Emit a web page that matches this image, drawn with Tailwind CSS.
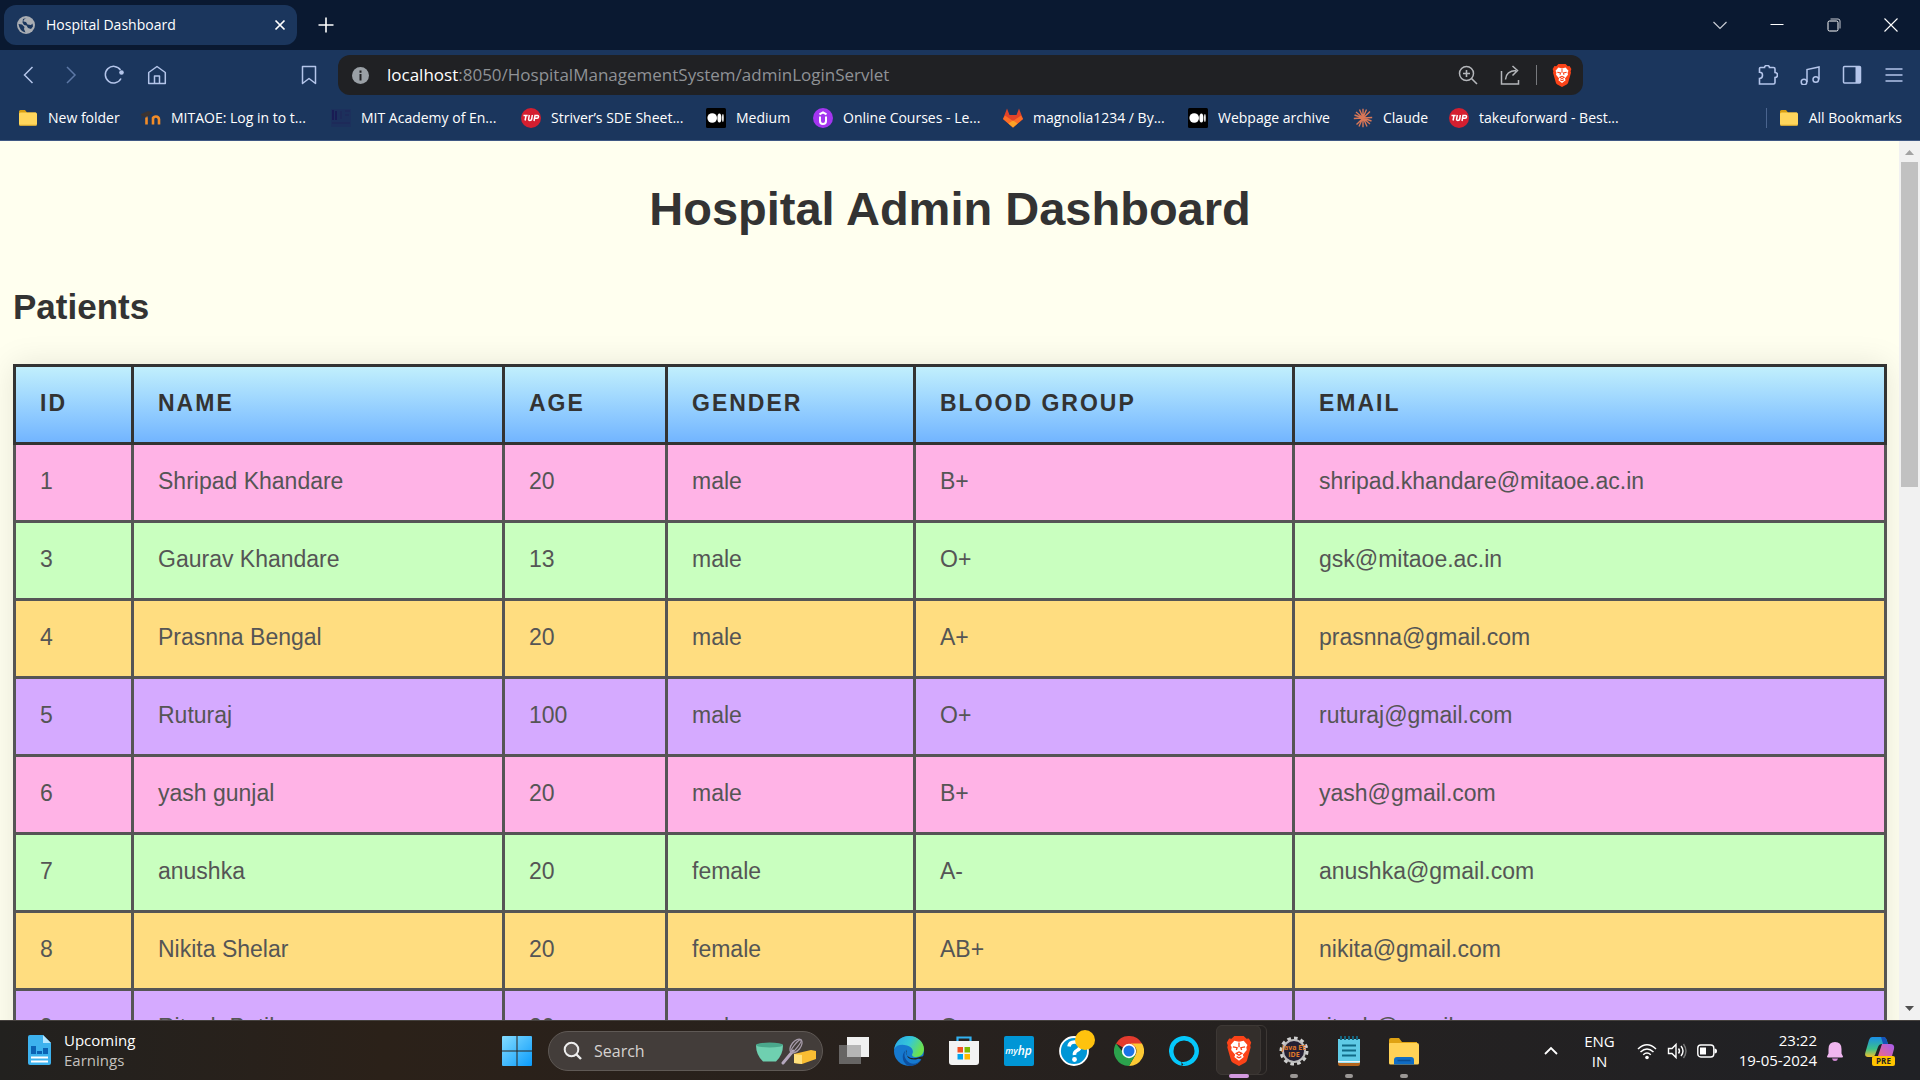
<!DOCTYPE html>
<html lang="en">
<head>
<meta charset="utf-8">
<title>Hospital Dashboard</title>
<script src="https://cdn.jsdelivr.net/npm/@tailwindcss/browser@4"></script>
</head>
<body class="flex h-screen flex-col overflow-hidden bg-[#ffffef] font-['Open_Sans',sans-serif]">
<svg class="hidden" aria-hidden="true">
  <symbol id="folder" viewBox="0 0 20 20"><path d="M1 3.500q0-1.500 1.500-1.500H7l2 2.500h9v11H1z" fill="#d9a012"/><rect x="1" y="4.500" width="18" height="13" rx="1.500" fill="#ffd65c"/><path d="M1.500 17.200h17" stroke="#e6b22e"/></symbol>
  <symbol id="tuf" viewBox="0 0 20 20"><circle cx="10" cy="10" r="10" fill="#d41f30"/><path d="M2.500 7.500h4.200M5 7.500l-.9 5M8.300 7l-.7 4q-.2 1.500 1.300 1.500t1.800-1.500l.6-4M13 13l1-5.500h2.500q1.200 0 1 1.400t-1.500 1.300h-2" fill="none" stroke="#fff" stroke-width="1.500"/></symbol>
  <symbol id="medium" viewBox="0 0 20 20"><rect width="20" height="20" rx="1.500" fill="#000"/><circle cx="6.200" cy="10" r="4.800" fill="#fff"/><ellipse cx="13.400" cy="10" rx="2" ry="4.500" fill="#fff"/><ellipse cx="16.900" cy="10" rx=".8" ry="4" fill="#fff"/></symbol>
  <symbol id="lion" viewBox="0 0 26 32"><path d="M5 3l3-3h10l3 3 2.500-.3L26 7l-1 3 .5 2-4 14q-.5 1.500-2 2.500L13 32l-6.500-3.500Q5 27.500 4.500 26L.5 12 1 10 0 7l2.500-4.300z" fill="#fb4318"/><path d="M8 5l5 1.200L18 5l4 4.500-1.200 2.500.5 3-4.300 5 1 2.500-5 4-5-4L9 20l-4.300-5 .5-3L4 9.500z" fill="#fff"/><path d="M6.500 11.500l4.500 1-.8 2.500M19.500 11.500l-4.500 1 .8 2.500M10 18.500l3-1.500 3 1.500-3 2zM10.500 22l2.500 1.300 2.500-1.300M13 7v5" fill="none" stroke="#fb4318" stroke-width="1.400"/></symbol>
</svg>

<header class="shrink-0 text-white">
  <div class="flex h-[50px] items-center bg-[#0a1931] pl-1">
    <div class="flex h-10 w-[293px] items-center rounded-xl bg-[#1b365d] pr-[7px] pl-[13px]">
      <svg class="h-[18px] w-[18px]" viewBox="0 0 18 18"><circle cx="9" cy="9" r="9" fill="#a9adb3"/><path d="M1.500 8l3.500.5 2.500 2.500-.5 2 1.500 3.500Q2.500 15 1.500 8zM9.500 2Q6 3.500 6.500 5.500L9 6l1.500 2.500 3.500.5 1.500-1.500.5 3-2 2.500-3-1-1.500-2.500L7 9 5.500 6.500 6 3z" fill="#1b365d"/></svg>
      <span class="ml-[11px] flex-1 text-sm">Hospital Dashboard</span>
      <button aria-label="Close tab" class="p-1"><svg class="h-3 w-3" viewBox="0 0 12 12"><path d="M1.500 1.500l9 9M10.500 1.500l-9 9" stroke="#fff" stroke-width="1.700"/></svg></button>
    </div>
    <button aria-label="New tab" class="ml-[19px] p-0.5"><svg class="h-4 w-4" viewBox="0 0 16 16"><path d="M8 .5v15M.5 8h15" stroke="#fff" stroke-width="1.600"/></svg></button>
    <div class="ml-auto flex items-center">
      <button aria-label="Search tabs" class="flex w-[57px] justify-center"><svg class="h-[14px] w-[14px]" viewBox="0 0 14 14"><path d="M.5 4L7 10.500 13.500 4" fill="none" stroke="#c8ccd4" stroke-width="1.200"/></svg></button>
      <button aria-label="Minimize" class="flex w-[57px] justify-center"><svg class="h-[14px] w-[14px]" viewBox="0 0 14 14"><path d="M.5 6.500h13" stroke="#fff"/></svg></button>
      <button aria-label="Restore" class="flex w-[57px] justify-center"><svg class="h-[14px] w-[14px]" viewBox="0 0 14 14"><rect x="1" y="3" width="10" height="10" rx="1.500" fill="none" stroke="#fff"/><path d="M3.500 1h7.500q2 0 2 2v7.500" fill="none" stroke="#c8ccd4"/></svg></button>
      <button aria-label="Close" class="flex w-[58px] justify-center"><svg class="h-[14px] w-[14px]" viewBox="0 0 14 14"><path d="M.5.5l13 13M13.500.5l-13 13" stroke="#fff" stroke-width="1.100"/></svg></button>
    </div>
  </div>

  <div class="flex h-[50px] items-center bg-[#1b365d] pr-4 pl-[18px]">
    <div class="flex gap-[23px]">
      <button aria-label="Back"><svg class="h-5 w-5" viewBox="0 0 20 20"><path d="M14.500 2L6.500 10l8 8" fill="none" stroke="#b4c5ea" stroke-width="1.500"/></svg></button>
      <button aria-label="Forward"><svg class="h-5 w-5" viewBox="0 0 20 20"><path d="M6 2l8 8-8 8" fill="none" stroke="#5d78a6" stroke-width="1.500"/></svg></button>
      <button aria-label="Reload"><svg class="h-5 w-5" viewBox="0 0 20 20"><path d="M17 13.500A8.300 8.300 0 1 1 16.500 5" fill="none" stroke="#b4c5ea" stroke-width="1.500"/><circle cx="17.500" cy="7.500" r="2.300" fill="#b4c5ea"/></svg></button>
      <button aria-label="Home"><svg class="h-5 w-5" viewBox="0 0 20 20"><path d="M1.700 7.500L10 1.500l8.300 6v11H1.700zM7.500 18.500V11h5v7.500" fill="none" stroke="#b4c5ea" stroke-width="1.500" stroke-linejoin="round"/></svg></button>
    </div>
    <button aria-label="Bookmark this tab" class="ml-[132px]"><svg class="h-5 w-5" viewBox="0 0 20 20"><path d="M3.500 1.500h13v17L10 13.500l-6.500 5z" fill="none" stroke="#b4c5ea" stroke-width="1.500" stroke-linejoin="round"/></svg></button>
    <div class="ml-[19px] flex h-10 w-[1245px] items-center rounded-xl bg-[#202124] pr-[11px] pl-[14px]">
      <svg class="h-[17px] w-[17px]" viewBox="0 0 17 17"><circle cx="8.500" cy="8.500" r="8.500" fill="#9aa0a6"/><path d="M8.500 3.500v2.200M8.500 7v6.500" stroke="#202124" stroke-width="2"/></svg>
      <a href="#" class="ml-[18px] flex-1 text-[17px] text-[#8f9296]"><span class="text-white">localhost</span>:8050/HospitalManagementSystem/adminLoginServlet</a>
      <button aria-label="Zoom"><svg class="h-5 w-5" viewBox="0 0 20 20"><circle cx="8.500" cy="8.500" r="7" fill="none" stroke="#b4b6ba" stroke-width="1.500"/><path d="M13.500 13.500l5.500 5.500M5 8.500h7M8.500 5v7" stroke="#b4b6ba" stroke-width="1.600"/></svg></button>
      <button aria-label="Share" class="ml-[22px]"><svg class="h-5 w-5" viewBox="0 0 20 20"><path d="M1.500 6v13h17v-4M5.500 14.500Q6 6 16 5.500M12.500 1l5 4.500-5 5" fill="none" stroke="#b4b6ba" stroke-width="1.500"/></svg></button>
      <span class="ml-4 h-5 w-px bg-[#77797d]"></span>
      <button aria-label="Brave Shields" class="ml-[15px]"><svg class="h-[23px] w-5"><use href="#lion"/></svg></button>
    </div>
    <div class="ml-auto flex gap-[22px]">
      <button aria-label="Extensions"><svg class="h-5 w-5" viewBox="0 0 20 20"><path d="M1.500 3.500q0-1 1-1H6.500Q6.500.5 9 .5t2.500 2h4q1.500 0 1.500 1.500v3.500q2.500 0 2.500 2.500T17 12.500v5q0 1.500-1.500 1.500h-14v-5.500q3 0 3-3.200t-3-3.100z" fill="none" stroke="#b4c5ea" stroke-width="1.600"/></svg></button>
      <button aria-label="Media"><svg class="h-5 w-5" viewBox="0 0 20 20"><path d="M7 17V4.500L19 2v12.500" fill="none" stroke="#b4c5ea" stroke-width="1.500"/><circle cx="4" cy="17" r="2.800" fill="none" stroke="#b4c5ea" stroke-width="1.500"/><circle cx="15.800" cy="14.500" r="2.800" fill="none" stroke="#b4c5ea" stroke-width="1.500"/></svg></button>
      <button aria-label="Side panel"><svg class="h-5 w-5" viewBox="0 0 20 20"><rect x="1.500" y="1.500" width="17" height="16.500" rx="1" fill="none" stroke="#b4c5ea" stroke-width="1.500"/><path d="M13.500 2h5v16h-5z" fill="#b4c5ea"/></svg></button>
      <button aria-label="Menu"><svg class="h-5 w-5" viewBox="0 0 20 20"><path d="M1.500 4h17M1.500 10h17M1.500 16h17" stroke="#b4c5ea" stroke-width="1.500"/></svg></button>
    </div>
  </div>

  <nav class="flex h-[41px] items-center gap-5 border-b border-[#3f5883] bg-[#1b365d] px-[18px] pb-1 text-sm whitespace-nowrap">
    <a href="#" class="flex w-[103px] items-center gap-[10px]"><svg class="h-5 w-5 shrink-0"><use href="#folder"/></svg>New folder</a>
    <a href="#" class="flex w-[170px] items-center gap-[10px]"><svg class="h-5 w-5 shrink-0" viewBox="0 0 20 20"><path d="M5.500 16.500V9.500M12 16.500V9.500M12 11q0-2.200 0 0M5.500 9.500h1M12 10.800q.5-2.300 3-2.300t3 2.700v5.300" fill="none" stroke="#f28c28" stroke-width="2.600"/><path d="M0 6.500l7-3 4 1-3 3-5 1zM1 7v5" fill="#3c3432" stroke="#3c3432" stroke-width=".8"/></svg>MITAOE: Log in to t...</a>
    <a href="#" class="flex w-[170px] items-center gap-[10px]"><svg class="h-5 w-5 shrink-0" viewBox="0 0 20 20"><path d="M0 1h20v18H0z" fill="#1c305c"/><path d="M2 2v10M5 3v9" stroke="#191c54" stroke-width="2"/><path d="M10 3v8M14 3h5M14 7h4M1 15h18" stroke="#1d2a59" stroke-width="2"/></svg>MIT Academy of En...</a>
    <a href="#" class="flex w-[165px] items-center gap-[10px]"><svg class="h-5 w-5 shrink-0"><use href="#tuf"/></svg>Striver’s SDE Sheet...</a>
    <a href="#" class="flex w-[87px] items-center gap-[10px]"><svg class="h-5 w-5 shrink-0"><use href="#medium"/></svg>Medium</a>
    <a href="#" class="flex w-[170px] items-center gap-[10px]"><svg class="h-5 w-5 shrink-0" viewBox="0 0 20 20"><circle cx="10" cy="10" r="10" fill="#a435f0"/><path d="M7 8.500v4.500q0 3 3 3t3-3V8.500M6.500 6.300L10 4.300l3.500 2" fill="none" stroke="#fff" stroke-width="2"/></svg>Online Courses - Le...</a>
    <a href="#" class="flex w-[165px] items-center gap-[10px]"><svg class="h-5 w-5 shrink-0" viewBox="0 0 20 20"><path d="M4 .5L6.500 7h7L16 .5 20 11l-10 8.500L0 11z" fill="#e24329"/><path d="M0 11l2-3.500 8 5.500 8-5.500 2 3.500-10 8.500z" fill="#fc6d26"/><path d="M5.500 15.500L10 12.500l4.500 3-4.500 4z" fill="#fca326"/></svg>magnolia1234 / By...</a>
    <a href="#" class="flex w-[145px] items-center gap-[10px]"><svg class="h-5 w-5 shrink-0"><use href="#medium"/></svg>Webpage archive</a>
    <a href="#" class="flex w-[76px] items-center gap-[10px]"><svg class="h-5 w-5 shrink-0" viewBox="0 0 20 20"><path d="M10 .8v18.400M.8 10.500l18.400-1M3 4l14 12M17 3.500L3.500 16.500M6.500 1.500l7.500 17M13.500 1.500L6 18.500M1.500 7l17 6" stroke="#d97757" stroke-width="1.400"/></svg>Claude</a>
    <a href="#" class="flex w-[171px] items-center gap-[10px]"><svg class="h-5 w-5 shrink-0"><use href="#tuf"/></svg>takeuforward - Best...</a>
    <a href="#" class="ml-auto flex items-center gap-[10px]"><span class="mr-0.5 h-5 w-px bg-[#4a648e]"></span><svg class="h-5 w-5 shrink-0"><use href="#folder"/></svg>All Bookmarks</a>
  </nav>
</header>

<div class="flex min-h-0 flex-1">
  <main class="min-w-0 flex-1 overflow-hidden pt-10 pr-3 pl-[13px] font-['Liberation_Sans',Arial,sans-serif]">
    <h1 class="text-center text-[47px] leading-[55px] font-bold text-[#333]">Hospital Admin Dashboard</h1>
    <h2 class="mt-[50px] text-[35px] leading-[41px] font-bold text-[#333]">Patients</h2>
    <table class="mt-[37px] w-full table-fixed border-collapse text-left text-[23px] leading-[27px] text-[#555] shadow-[0_0_30px_rgba(0,0,0,0.1)] [&_td]:border-[3px] [&_td]:border-[#555] [&_td]:px-6 [&_td]:pt-[23px] [&_td]:pb-[25px] [&_th]:border-[3px] [&_th]:border-[#333] [&_th]:px-6 [&_th]:pt-[23px] [&_th]:pb-[25px]">
      <colgroup><col class="w-[118px]"><col class="w-[371px]"><col class="w-[163px]"><col class="w-[248px]"><col class="w-[379px]"><col></colgroup>
      <thead>
        <tr class="bg-linear-to-b from-[#c2f0fc] to-[#70b3ff] tracking-[2px] text-[#333] uppercase"><th>ID</th><th>Name</th><th>Age</th><th>Gender</th><th>Blood Group</th><th>Email</th></tr>
      </thead>
      <tbody>
        <tr class="bg-[#ffb3e6]"><td>1</td><td>Shripad Khandare</td><td>20</td><td>male</td><td>B+</td><td>shripad.khandare@mitaoe.ac.in</td></tr>
        <tr class="bg-[#c9ffbf]"><td>3</td><td>Gaurav Khandare</td><td>13</td><td>male</td><td>O+</td><td>gsk@mitaoe.ac.in</td></tr>
        <tr class="bg-[#ffdd80]"><td>4</td><td>Prasnna Bengal</td><td>20</td><td>male</td><td>A+</td><td>prasnna@gmail.com</td></tr>
        <tr class="bg-[#d5aaff]"><td>5</td><td>Ruturaj</td><td>100</td><td>male</td><td>O+</td><td>ruturaj@gmail.com</td></tr>
        <tr class="bg-[#ffb3e6]"><td>6</td><td>yash gunjal</td><td>20</td><td>male</td><td>B+</td><td>yash@gmail.com</td></tr>
        <tr class="bg-[#c9ffbf]"><td>7</td><td>anushka</td><td>20</td><td>female</td><td>A-</td><td>anushka@gmail.com</td></tr>
        <tr class="bg-[#ffdd80]"><td>8</td><td>Nikita Shelar</td><td>20</td><td>female</td><td>AB+</td><td>nikita@gmail.com</td></tr>
        <tr class="bg-[#d5aaff]"><td>9</td><td>Ritesh Patil</td><td>20</td><td>male</td><td>O+</td><td>ritesh@gmail.com</td></tr>
      </tbody>
    </table>
  </main>
  <div class="flex w-[21px] shrink-0 flex-col items-center bg-[#f1f1f1]">
    <svg class="h-[21px] w-[21px]" viewBox="0 0 21 21"><path d="M6 14l4.500-5 4.500 5z" fill="#a3a3a3"/></svg>
    <div class="h-[325px] w-[17px] bg-[#c1c1c1]"></div>
    <svg class="mt-auto h-[21px] w-[21px]" viewBox="0 0 21 21"><path d="M6 7l4.500 5L15 7z" fill="#505050"/></svg>
  </div>
</div>

<footer class="flex h-[60px] shrink-0 items-center border-t border-[#45413e] bg-linear-to-r from-[#22211f] via-[#2b2119] via-20% to-[#202125] text-[15px] text-white">
  <button class="flex w-[489px] items-center gap-3 pb-0.5 pl-7 text-left leading-5">
    <svg class="h-[30px] w-6" viewBox="0 0 24 30"><path d="M2 0h13l8 8v20q0 2-2 2H2q-2 0-2-2V2q0-2 2-2z" fill="#3db2ee"/><path d="M15 0l8 8h-8z" fill="#b5e6ff"/><path d="M3 11h5v8H3zM9 16h5v3H9zM15 13h5v6h-5z" fill="#0b63b4"/><path d="M3 22.500h17M3 26.500h17" stroke="#fff" stroke-width="2"/></svg>
    <span>Upcoming<br><span class="text-[#c4c1bf]">Earnings</span></span>
  </button>
  <button aria-label="Start" class="flex w-[55px] justify-center"><svg class="h-[30px] w-[30px]" viewBox="0 0 30 30"><defs><linearGradient id="win" x1="0" y1="0" x2="1" y2="1"><stop stop-color="#84dcff"/><stop offset="1" stop-color="#0a9bfb"/></linearGradient></defs><path d="M0 1q0-1 1-1h13.500v14.500H0zM15.500 0H29q1 0 1 1v13.500H15.500zM0 15.500h14.500V30H1q-1 0-1-1zM15.500 15.500H30V29q0 1-1 1H15.500z" fill="url(#win)"/></svg></button>
  <label class="ml-1 flex h-10 w-[275px] items-center rounded-full border border-[#5f5955] bg-[#433d3a] pr-1.5 pl-[14px]">
    <svg class="h-5 w-5" viewBox="0 0 20 20"><circle cx="8.500" cy="8.500" r="6.800" fill="#5b5553" stroke="#eee" stroke-width="2"/><path d="M13.500 13.500l4.500 4.500" stroke="#eee" stroke-width="2.400"/></svg>
    <input type="text" placeholder="Search" aria-label="Search" class="ml-[11px] w-0 flex-1 bg-transparent text-base outline-none placeholder:text-[#d5d2d0]">
    <svg class="h-[28px] w-[61px]" viewBox="0 0 61 28"><path d="M1 8h27q0 10-7 16.500h-13Q1 18 1 8z" fill="#6fd0b0"/><ellipse cx="14.500" cy="8" rx="13.500" ry="2.500" fill="#4aa88c"/><path d="M28 26l10-12" stroke="#b5a7bd" stroke-width="3" stroke-linecap="round"/><ellipse cx="41" cy="9" rx="4.500" ry="8" transform="rotate(38 41 9)" fill="none" stroke="#a79cab" stroke-width="1.300"/><ellipse cx="41" cy="9" rx="1.800" ry="8" transform="rotate(38 41 9)" fill="none" stroke="#a79cab" stroke-width="1.200"/><path d="M39 17l17-4 5 1v8l-14 5-8-1z" fill="#f9bd33"/><path d="M39 17l8 1v9l-8-1z" fill="#ffe07c"/></svg>
  </label>
  <div class="ml-[3px] flex h-full items-center [&>button]:relative [&>button]:flex [&>button]:h-full [&>button]:w-[55px] [&>button]:items-center [&>button]:justify-center">
    <button aria-label="Task view"><svg class="h-[30px] w-[30px]" viewBox="0 0 30 30"><path d="M8 1h22v20H8z" fill="#f0f0f0"/><path d="M0 9h22v19H0z" fill="#777" fill-opacity=".8"/><path d="M8 9h14v12H8z" fill="#b5b5b5"/></svg></button>
    <button aria-label="Edge"><svg class="h-[30px] w-[30px]" viewBox="0 0 30 30"><defs><linearGradient id="edge" x1="0" y1="0" x2="1" y2=".4"><stop stop-color="#2aa5e8"/><stop offset=".55" stop-color="#35c8d8"/><stop offset="1" stop-color="#6be14e"/></linearGradient></defs><circle cx="15" cy="15" r="15" fill="#1679cf"/><path d="M.2 13.500C1.500 5 7.500 0 15 0c9 0 15 6.500 15 13 0 5-3.500 8-8 8-4 0-4.500-2-3.500-3.500S19 11 13 9.500 2 9 .2 13.500z" fill="url(#edge)"/><path d="M12 14c-3 4-1.500 10 4 13 4 2 9 0 12-4.500-3 6-8 7.500-13 7.500-6-2-9-11-3-16z" fill="#0d4f9e"/><path d="M13 13.500q-2.500 3.500.5 6.500 4 4 12 1l4.500-1v3l-2 1q-3-2-6-.5-8 .5-9-4-1.500-3 0-6z" fill="#25211e"/></svg></button>
    <button aria-label="Microsoft Store"><svg class="h-[30px] w-[30px]" viewBox="0 0 30 30"><path d="M8.500 6V1.500h13V6" fill="none" stroke="#32b1f0" stroke-width="2.200"/><path d="M0 5h30v21q0 3-3 3H3q-3 0-3-3z" fill="#f3f3f3"/><path d="M8.500 11H14v5.500H8.500z" fill="#f25022"/><path d="M15.500 11H21v5.500h-5.500z" fill="#7fba00"/><path d="M8.500 18H14v5.500H8.500z" fill="#00a4ef"/><path d="M15.500 18H21v5.500h-5.500z" fill="#ffb900"/></svg></button>
    <button aria-label="myHP"><span class="flex h-[30px] w-[30px] items-center justify-center rounded-xs bg-[#0096d6] text-[9px] font-semibold italic">my<span class="text-xs">hp</span></span></button>
    <button aria-label="HP Support"><svg class="h-[42px] w-[42px]" viewBox="0 0 42 42"><circle cx="21" cy="21" r="14" fill="#0096d6" stroke="#fff" stroke-width="1.800"/><path d="M16 16.500q.5-4.500 5.500-4.500t5.500 4.500q0 2.500-3 4T21.500 25" fill="none" stroke="#fff" stroke-width="3.600"/><circle cx="21.500" cy="29.500" r="2.400" fill="#fff"/><circle cx="32" cy="10" r="10" fill="#ffc20e"/></svg></button>
    <button aria-label="Chrome"><svg class="h-[30px] w-[30px]" viewBox="0 0 30 30"><path d="M15 15L2 7.500A15 15 0 0 1 28 7.500z" fill="#e33b2e"/><path d="M15 15L28 7.500H15A7.500 7.500 0 0 1 21.500 18.700L15 30A15 15 0 0 0 28 7.500z" fill="#fcc934"/><path d="M15 15h-7L2 7.500A15 15 0 0 0 15 30l6.500-11.300z" fill="#2ba24c"/><circle cx="15" cy="15" r="7.200" fill="#fff"/><circle cx="15" cy="15" r="5.500" fill="#1b73e8"/></svg></button>
    <button aria-label="Alexa"><svg class="h-[30px] w-[30px]" viewBox="0 0 30 30"><path d="M12.500 29.800V26C7.500 24.500 4.500 20 4.500 15a10.500 10.500 0 1 1 21 0c0 7-6 12-13 14.800A15 15 0 1 1 30 15 15 15 0 0 1 12.500 29.800z" fill="#05c8fb" fill-rule="evenodd"/><path d="M12.500 26q8 1 13-8l-2 7-9 4z" fill="#05c8fb"/></svg></button>
    <button aria-label="Brave"><span class="absolute top-1 left-1.5 h-[50px] w-[50px] rounded-md border border-[#3d3835]"></span><span class="absolute top-1 left-[5px] h-[50px] w-[45px] rounded-md border border-[#3d3835] bg-[#332e2b]"></span><svg class="relative h-[30px] w-[26px]"><use href="#lion"/></svg><span class="absolute bottom-0.5 left-[18px] h-1 w-5 rounded-full bg-[#d49ae0]"></span></button>
    <button aria-label="Java EE IDE"><svg class="h-[30px] w-[30px]" viewBox="0 0 30 30"><circle cx="15" cy="15" r="12.500" fill="none" stroke="#cfcfcf" stroke-width="4" stroke-dasharray="3.500 3"/><circle cx="15" cy="15" r="11" fill="#252033" stroke="#bdbdbd" stroke-width="2"/><text x="15" y="14" text-anchor="middle" font-size="7" font-weight="700" fill="#e07a2a">Java EE</text><text x="15" y="21" text-anchor="middle" font-size="7" font-weight="700" fill="#e07a2a">IDE</text></svg><span class="absolute bottom-0.5 h-1 w-2 rounded-full bg-[#9b9795]"></span></button>
    <button aria-label="Notepad"><svg class="h-[30px] w-6" viewBox="0 0 24 30"><path d="M1 26h22v2q0 2-2 2H3q-2 0-2-2z" fill="#b5651d"/><path d="M1 3h22v22q0 2-2 2H3q-2 0-2-2z" fill="#5fcbe6"/><path d="M1 25h22v1.500H1z" fill="#e8f4f8"/><path d="M4 0v4M8 0v4M12 0v4M16 0v4M20 0v4" stroke="#14647e" stroke-width="2"/><path d="M5 9.500h14M5 14.500h14M5 19.500h14" stroke="#106a86" stroke-width="1.800"/></svg><span class="absolute bottom-0.5 h-1 w-2 rounded-full bg-[#9b9795]"></span></button>
    <button aria-label="File Explorer"><svg class="h-[30px] w-[30px]" viewBox="0 0 30 30"><path d="M0 4q0-2 2-2h8l3 4h15v8H0z" fill="#dfa213"/><path d="M0 8q0-1 1-1h27q2 0 2 2v18q0 1.500-1.500 1.500h-27Q0 28.500 0 27z" fill="#ffd257"/><path d="M5 28.500V24q0-3 3-3h14q3 0 3 3v4.500z" fill="#0f6cc4"/><path d="M8.500 24.500h13" stroke="#0a4f96" stroke-width="1.500"/></svg><span class="absolute bottom-0.5 h-1 w-2 rounded-full bg-[#9b9795]"></span></button>
  </div>
  <div class="ml-auto flex items-center pr-[25px] leading-5">
    <button aria-label="Show hidden icons"><svg class="h-4 w-4" viewBox="0 0 16 16"><path d="M2 11l6-6 6 6" fill="none" stroke="#fff" stroke-width="1.800"/></svg></button>
    <button class="ml-[25px] text-center">ENG<br>IN</button>
    <button aria-label="Network, volume, battery" class="ml-[22px] flex items-center gap-[10px]">
      <svg class="h-5 w-5" viewBox="0 0 20 20"><path d="M1 8q9-8.500 18 0M3.500 11q6.500-6 13 0M6.200 13.700q3.800-3.300 7.600 0" fill="none" stroke="#fff" stroke-width="1.500"/><circle cx="10" cy="16.500" r="1.800" fill="#fff"/></svg>
      <svg class="h-5 w-5" viewBox="0 0 20 20"><path d="M1.500 7.500H5L9 3.500v13l-4-4H1.500z" fill="none" stroke="#fff" stroke-width="1.400"/><path d="M11.500 7.500q2 2.500 0 5M14 5q4 5 0 10" fill="none" stroke="#fff" stroke-width="1.400"/><path d="M16.500 3q5 7 0 14" fill="none" stroke="#777" stroke-width="1.400"/></svg>
      <svg class="h-5 w-5" viewBox="0 0 20 20"><rect x=".8" y="4" width="16" height="12" rx="3" fill="none" stroke="#fff" stroke-width="1.400"/><path d="M3 6.500h6v7H3zM17.500 7.500q2.500 0 2.500 2.500t-2.500 2.500z" fill="#fff"/></svg>
    </button>
    <button class="ml-[22px] pb-0.5 text-right">23:22<br>19-05-2024</button>
    <button aria-label="Notifications" class="ml-[9px]"><svg class="h-5 w-[18px]" viewBox="0 0 18 20"><path d="M1 15.500l1.500-3V8q0-7 6.500-7t6.500 7v4.500l1.500 3q0 1-1 1H2q-1 0-1-1z" fill="#f0b6f0"/><path d="M6 17.500h6q-.5 2.500-3 2.500t-3-2.500z" fill="#d58ad8"/></svg></button>
    <button aria-label="Copilot preview" class="ml-[21px]"><svg class="h-[30px] w-[30px]" viewBox="0 0 30 30"><defs><linearGradient id="cp1" x1="0" y1="0" x2="0" y2="1"><stop stop-color="#1a8fe8"/><stop offset=".6" stop-color="#3cc08a"/><stop offset="1" stop-color="#f2c02c"/></linearGradient><linearGradient id="cp2" x1="1" y1="0" x2="0" y2="1"><stop stop-color="#a45cf0"/><stop offset="1" stop-color="#f76a7a"/></linearGradient></defs><path d="M7 1h11q3 0 4 4l1 3h-6q-3 0-4 3l-3 8q-1 2-3 2H3q-4 0-2.500-5L4 4q1-3 3-3z" fill="url(#cp1)"/><path d="M17 8h8q5 0 4 5l-2 7q-1 3-4 3h-11z" fill="url(#cp2)"/><path d="M16 1h3q2 0 3 4l1 3h-5z" fill="#1553b8"/><rect x="7" y="20" width="23" height="10" rx="2" fill="#ffc400"/><text x="18.500" y="28" text-anchor="middle" font-size="8" font-weight="700" fill="#222">PRE</text></svg></button>
  </div>
</footer>
</body>
</html>
